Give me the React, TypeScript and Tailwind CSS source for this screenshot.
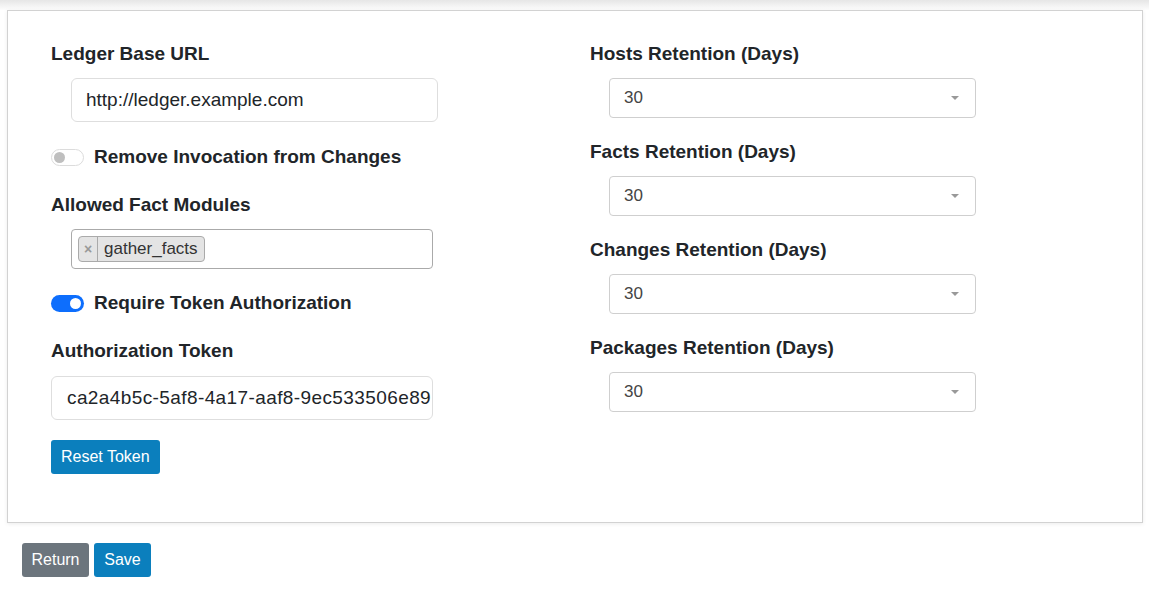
import React from 'react'

const FONT = { fontFamily: '"Liberation Sans", Arial, sans-serif' }

const Toggle = ({ on }: { on: boolean }) =>
    on ? (
        <div className="w-[33px] h-[17px] rounded-full bg-[#0d6efd] flex items-center justify-end px-[3px]">
            <div className="w-[11px] h-[11px] rounded-full bg-white" />
        </div>
    ) : (
        <div className="w-[33px] h-[17px] rounded-full bg-white border border-[#dcdcdc] flex items-center px-[2px]">
            <div className="w-[11px] h-[11px] rounded-full bg-[#bfbfbf]" />
        </div>
    )

const Label = ({ children, className = '' }: { children: React.ReactNode; className?: string }) => (
    <div className={`text-[19px] leading-6 font-bold text-[#212529] ${className}`}>{children}</div>
)

const Select = () => (
    <div className="mt-3 ml-[19px] w-[367px] h-10 rounded border border-[#cfcfcf] bg-white flex items-center justify-between pl-[14px] pr-[16px]">
        <span className="text-[17px] text-[#444]">30</span>
        <span className="w-0 h-0 border-l-[4px] border-r-[4px] border-t-[4px] border-l-transparent border-r-transparent border-t-[#999]" />
    </div>
)

export default function App() {
    const retention = ['Hosts', 'Facts', 'Changes', 'Packages']

    return (
        <div className="min-h-[591px] bg-white" style={FONT}>
            <div className="h-[10px] bg-linear-to-b from-[#e6e6e6] to-[#fdfdfd]" />
            <div className="mx-[7px] w-[1136px] border border-[#d2d2d2] bg-white shadow-[0_1px_4px_rgba(0,0,0,0.08)] pt-[31px] pb-[48px] pl-[43px] flex">
                {/* left column */}
                <div className="w-[539px] flex flex-col">
                    <Label>Ledger Base URL</Label>
                    <div className="mt-3 ml-5 w-[367px] h-11 rounded-md border border-[#dedede] flex items-center px-[14px] text-[19px] text-[#212529]">
                        http://ledger.example.com
                    </div>

                    <div className="mt-[23px] h-6 flex items-center gap-[10px]">
                        <Toggle on={false} />
                        <Label>Remove Invocation from Changes</Label>
                    </div>

                    <Label className="mt-6">Allowed Fact Modules</Label>
                    <div className="mt-3 ml-5 w-[362px] h-10 rounded border border-[#aaa] flex items-center px-[6px]">
                        <div className="h-[26px] flex items-center rounded border border-[#aaa] bg-[#e4e4e4]">
                            <span className="w-[19px] h-full flex items-center justify-center border-r border-[#aaa] text-[#999] font-bold text-[14px]">×</span>
                            <span className="px-[6px] text-[17px] text-[#333]">gather_facts</span>
                        </div>
                    </div>

                    <div className="mt-[22px] h-6 flex items-center gap-[10px]">
                        <Toggle on={true} />
                        <Label>Require Token Authorization</Label>
                    </div>

                    <Label className="mt-6">Authorization Token</Label>
                    <div className="mt-[13px] w-[382px] h-11 rounded-md border border-[#dedede] flex items-center pl-[15px] text-[19px] tracking-[0.4px] text-[#212529] overflow-hidden whitespace-nowrap">
                        ca2a4b5c-5af8-4a17-aaf8-9ec533506e89
                    </div>

                    <div className="mt-5">
                        <button className="h-[34px] px-[10px] rounded-[3px] bg-[#0b7fbd] text-white text-[16px]">Reset Token</button>
                    </div>
                </div>

                {/* right column */}
                <div className="flex flex-col">
                    {retention.map((name, i) => (
                        <div key={name} className={i === 0 ? '' : 'mt-[22px]'}>
                            <Label>{name} Retention (Days)</Label>
                            <Select />
                        </div>
                    ))}
                </div>
            </div>

            <div className="mt-5 ml-[22px] flex gap-[5px]">
                <button className="h-[34px] w-[67px] rounded-[3px] bg-[#6c757d] text-white text-[16px]">Return</button>
                <button className="h-[34px] w-[57px] rounded-[3px] bg-[#0b7fbd] text-white text-[16px]">Save</button>
            </div>
        </div>
    )
}
